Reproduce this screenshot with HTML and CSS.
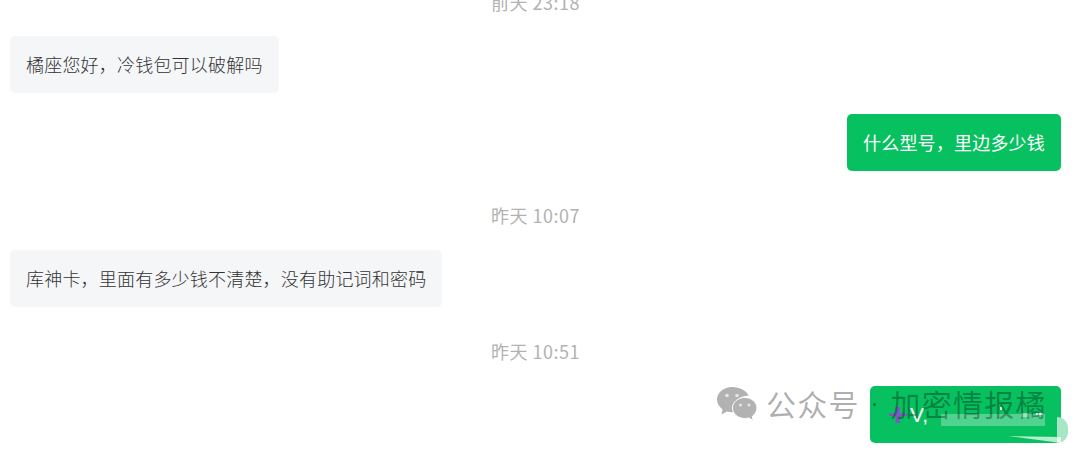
FILE: index.html
```html
<!DOCTYPE html>
<html lang="zh-CN">
<head>
<meta charset="utf-8">
<title>聊天记录</title>
<link rel="stylesheet" href="styles.css">
</head>
<body>
<main class="chat">
  <div class="time time-first">前天 23:18</div>
  <div class="row"><div class="bubble in">橘座您好，冷钱包可以破解吗</div></div>
  <div class="row out"><div class="bubble sent">什么型号，里边多少钱</div></div>
  <div class="time">昨天 10:07</div>
  <div class="row"><div class="bubble in">库神卡，里面有多少钱不清楚，没有助记词和密码</div></div>
  <div class="time">昨天 10:51</div>
  <div class="row out">
    <div class="bubble sent last"><span class="v">V,</span></div>
  </div>
</main>

<div class="marks" aria-hidden="true">
  <span class="bar"></span>
  <span class="blob"></span>
  <span class="wedge"></span>
  <span class="speck speck-a"></span>
  <span class="speck speck-b"></span>
  <span class="speck speck-c"></span>
  <svg class="cross" viewBox="0 0 18 16"><path d="M0 6.500h18v2.500H0zM6.500 0h4.500v16H6.500z" fill="#7a5cc0"/></svg>
</div>

<div class="watermark">
  <svg class="wechat" viewBox="0 0 42 36">
    <path d="M16 1C7.700 1 1 6.600 1 13.600c0 4 2.200 7.500 5.600 9.800L5.400 28.500l5.600-3c1.600.5 3.300.7 5 .7.700 0 1.400 0 2-.1-.4-1.300-.6-2.500-.6-3.800 0-6.900 6.400-12.500 14.500-12.500l.8 0C30.600 4.700 24 1 16 1z" fill="#b2b2b2"/>
    <path d="M41 22c0-5.800-5.700-10.500-12.300-10.500S16.400 16.200 16.400 22s5.700 10.500 12.300 10.500c1.400 0 2.800-.2 4.100-.6l4.500 2.800-1-4.300C38.900 28.500 41 25.400 41 22z" fill="#b2b2b2" stroke="#fff" stroke-width="1"/>
    <circle cx="11" cy="9.500" r="1.800" fill="#e6e6e6"/><circle cx="21" cy="9.500" r="1.800" fill="#e6e6e6"/>
    <circle cx="24.500" cy="19" r="1.500" fill="#e6e6e6"/><circle cx="33" cy="19" r="1.500" fill="#e6e6e6"/>
  </svg>
  <span class="mark-text">公众号</span><span class="mark-dot"></span><span class="mark-text">加密情报橘</span>
</div>
</body>
</html>
```

FILE: styles.css
```css
html, body {
  margin: 0;
  padding: 0;
  height: 100%;
  background: #fff;
  overflow: hidden;
}

body {
  position: relative;
  font-family: "Noto Sans CJK SC", "Noto Sans", sans-serif;
}

.chat {
  display: flex;
  flex-direction: column;
  padding: 0 19px 0 10px;
}

.time {
  height: 24px;
  line-height: 22px;
  margin: 33px 0 22px;
  text-align: center;
  font-size: 18px;
  letter-spacing: 0.5px;
  color: #b2b2b2;
}

.time-first {
  margin-top: -9px;
  margin-bottom: 21px;
}

.row {
  display: flex;
}

.row.out {
  justify-content: flex-end;
  margin-top: 21px;
}

.time + .row.out {
  margin-top: 0;
}

.bubble {
  box-sizing: border-box;
  height: 57px;
  line-height: 56px;
  padding: 0 16px;
  border-radius: 5px;
  font-size: 18px;
  letter-spacing: 0.2px;
  white-space: nowrap;
}

.in {
  background: #f5f6f8;
  color: #333;
  font-weight: 300;
}

.sent {
  background: #07c160;
  color: #fff;
}

.last {
  width: 191px;
}

.v {
  margin-left: 24px;
  font-size: 21px;
  font-family: "Liberation Sans", sans-serif;
}

.marks span,
.cross {
  position: absolute;
  display: block;
}

.bar {
  left: 941px;
  top: 414px;
  width: 104px;
  height: 12px;
  background: rgba(255, 255, 255, 0.3);
}

.blob {
  left: 1057px;
  top: 417px;
  width: 11px;
  height: 26px;
  border-radius: 0 13px 13px 0;
  background: #a6e6c4;
}

.wedge {
  left: 1008px;
  top: 436px;
  width: 53px;
  height: 7px;
  background: rgba(255, 255, 255, 0.7);
  clip-path: polygon(0 0, 100% 15%, 100% 100%);
}

.speck {
  background: #e8f8ef;
}

.speck-a {
  left: 1000px;
  top: 407px;
  width: 2px;
  height: 3px;
}

.speck-b {
  left: 1021px;
  top: 413px;
  width: 8px;
  height: 4px;
  opacity: 0.5;
}

.speck-c {
  left: 1036px;
  top: 413px;
  width: 7px;
  height: 2px;
}

.cross {
  left: 889px;
  top: 407px;
  width: 18px;
  height: 16px;
}

.watermark {
  position: absolute;
  left: 716px;
  top: 386px;
  display: flex;
  align-items: center;
  height: 36px;
  color: rgba(0, 0, 0, 0.32);
  white-space: nowrap;
}

.wechat {
  width: 42px;
  height: 36px;
  margin-right: 8px;
}

.mark-text {
  font-size: 30px;
  line-height: 34px;
  letter-spacing: 1.2px;
  margin-bottom: 2px;
}

.mark-dot {
  width: 3px;
  height: 3px;
  margin: 0 15px 0 13px;
  border-radius: 50%;
  background: rgba(0, 0, 0, 0.45);
}
```
